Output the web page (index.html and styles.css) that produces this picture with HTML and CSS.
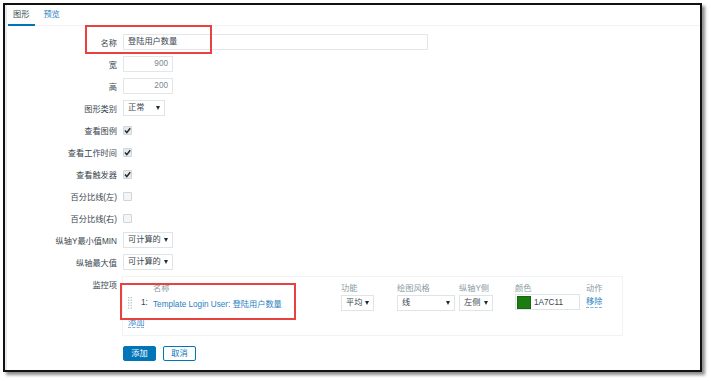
FILE: index.html
```html
<!DOCTYPE html>
<html lang="zh-CN">
<head>
<meta charset="utf-8">
<title>图形</title>
<link rel="stylesheet" href="styles.css">
</head>
<body>
<div class="frame">
  <div class="page">
    <div class="tabs">
      <span class="tab active">图形</span>
      <span class="tab link">预览</span>
    </div>
    <div class="form">
      <div class="row"><span class="lbl">名称</span><div class="ctl"><span class="inp name">登陆用户数量</span></div></div>
      <div class="row"><span class="lbl">宽</span><div class="ctl"><span class="inp num">900</span></div></div>
      <div class="row"><span class="lbl">高</span><div class="ctl"><span class="inp num">200</span></div></div>
      <div class="row"><span class="lbl">图形类别</span><div class="ctl"><span class="sel w42">正常<i class="arr"></i></span></div></div>
      <div class="row"><span class="lbl">查看图例</span><div class="ctl"><span class="cb on"><svg viewBox="0 0 9 9" width="9" height="9"><path d="M2 4.6 L3.8 6.6 L7.2 2.2" fill="none" stroke="#1f2c33" stroke-width="1.5"/></svg></span></div></div>
      <div class="row"><span class="lbl">查看工作时间</span><div class="ctl"><span class="cb on"><svg viewBox="0 0 9 9" width="9" height="9"><path d="M2 4.6 L3.8 6.6 L7.2 2.2" fill="none" stroke="#1f2c33" stroke-width="1.5"/></svg></span></div></div>
      <div class="row"><span class="lbl">查看触发器</span><div class="ctl"><span class="cb on"><svg viewBox="0 0 9 9" width="9" height="9"><path d="M2 4.6 L3.8 6.6 L7.2 2.2" fill="none" stroke="#1f2c33" stroke-width="1.5"/></svg></span></div></div>
      <div class="row"><span class="lbl">百分比线(左)</span><div class="ctl"><span class="cb"></span></div></div>
      <div class="row"><span class="lbl">百分比线(右)</span><div class="ctl"><span class="cb"></span></div></div>
      <div class="row"><span class="lbl">纵轴Y最小值MIN</span><div class="ctl"><span class="sel w50">可计算的<i class="arr"></i></span></div></div>
      <div class="row"><span class="lbl">纵轴最大值</span><div class="ctl"><span class="sel w50">可计算的<i class="arr"></i></span></div></div>
      <div class="row top"><span class="lbl">监控项</span>
        <div class="ctl">
          <div class="items">
            <div class="irow head">
              <span></span><span></span><span>名称</span><span>功能</span><span>绘图风格</span><span>纵轴Y侧</span><span>颜色</span><span>动作</span>
            </div>
            <div class="irow data">
              <span class="drag"><svg viewBox="0 0 4 12" width="4" height="12"><g fill="#b4bfc6"><rect x="0" y="0" width="1.3" height="1.3"/><rect x="2.6" y="0" width="1.3" height="1.3"/><rect x="0" y="2.6" width="1.3" height="1.3"/><rect x="2.6" y="2.6" width="1.3" height="1.3"/><rect x="0" y="5.2" width="1.3" height="1.3"/><rect x="2.6" y="5.2" width="1.3" height="1.3"/><rect x="0" y="7.8" width="1.3" height="1.3"/><rect x="2.6" y="7.8" width="1.3" height="1.3"/><rect x="0" y="10.4" width="1.3" height="1.3"/><rect x="2.6" y="10.4" width="1.3" height="1.3"/></g></svg></span>
              <span class="no">1:</span>
              <span class="link">Template Login User: 登陆用户数量</span>
              <span><span class="sel w33">平均<i class="arr"></i></span></span>
              <span><span class="sel w58">线<i class="arr"></i></span></span>
              <span><span class="sel w34">左侧<i class="arr"></i></span></span>
              <span><span class="color"><i class="swatch"></i>1A7C11</span></span>
              <span class="link act">移除</span>
            </div>
            <div class="addrow"><span class="link act">添加</span></div>
          </div>
        </div>
      </div>
      <div class="row btns"><span class="lbl"></span>
        <div class="ctl"><span class="btn primary">添加</span><span class="btn">取消</span></div>
      </div>
    </div>
  </div>
  <div class="mark m1"></div>
  <div class="mark m2"></div>
</div>
</body>
</html>
```
FILE: styles.css
```css
* { box-sizing: border-box; }
html, body { margin: 0; padding: 0; background: #fff; }
body {
  font-family: "Liberation Sans", "Noto Sans CJK SC", Arial, sans-serif;
  font-size: 8.2px;
  color: #39464e;
  width: 711px;
  height: 381px;
  overflow: hidden;
}
.frame {
  position: relative;
  margin: 3px 0 0 3px;
  width: 699px;
  height: 369px;
  border: 2px solid #111;
  box-shadow: 3px 3px 3px rgba(0, 0, 0, 0.45);
  background: #fff;
}
.page {
  height: 100%;
  border-left: 2px solid #e8ecf0;
}
.tabs {
  display: flex;
  height: 21px;
  padding-left: 1px;
  border-bottom: 1px solid #f0f2f4;
}
.tab {
  margin-top: 1px;
  line-height: 18px;
  height: 20px;
  padding: 0 6px 0 5px;
  border-bottom: 2px solid transparent;
}
.tab.active { border-bottom-color: #0275b8; }
.tab + .tab { margin-left: 3px; }
.link { color: #2a7fbf; }
.form { padding-top: 5px; }
.row {
  display: grid;
  grid-template-columns: 110px 1fr;
  column-gap: 6px;
  height: 22px;
  align-items: center;
}
.lbl { text-align: right; white-space: nowrap; }
.ctl { display: flex; align-items: center; }
.inp {
  display: inline-block;
  height: 16px;
  line-height: 14px;
  border: 1px solid #e3e7ea;
  padding: 0 4px;
  background: #fff;
}
.inp.name { width: 305px; }
.inp.num { width: 50px; text-align: right; color: #7a8890; }
.sel {
  position: relative;
  display: inline-block;
  height: 16px;
  line-height: 14px;
  border: 1px solid #dfe4e7;
  padding: 0 4px;
  background: #fff;
  white-space: nowrap;
}
.arr {
  position: absolute;
  right: 4px;
  top: 5px;
  width: 0;
  height: 0;
  border-left: 2.5px solid transparent;
  border-right: 2.5px solid transparent;
  border-top: 4px solid #1f2c33;
}
.w42 { width: 42px; }
.w50 { width: 50px; }
.w33 { width: 33px; }
.w58 { width: 58px; }
.w34 { width: 34px; }
.cb {
  display: inline-block;
  width: 9px;
  height: 9px;
  border: 1px solid #cfd5d9;
  background: #f4f5f6;
  border-radius: 1px;
  position: relative;
}
.cb.on { background: #e7eaec; }
.cb svg { position: absolute; left: -1px; top: -1px; }
.row.top {
  height: auto;
  align-items: start;
  margin-top: 3px;
}
.row.top .lbl { line-height: 20px; }
.items {
  width: 501px;
  margin-left: -1px;
  border: 1px solid #f0f2f4;
  padding: 4px 0 6px 4px;
}
.irow {
  display: grid;
  grid-template-columns: 14px 12px 188px 56px 62px 56px 71px 1fr;
  align-items: center;
}
.irow.head { height: 12px; color: #8a9aa3; }
.irow.data { height: 17px; margin-top: 1px; }
.drag { display: flex; align-items: center; padding-left: 1px; }
.drag svg { display: block; }
.color {
  display: inline-flex;
  align-items: center;
  width: 65px;
  height: 16px;
  border: 1px solid #dfe4e7;
  padding: 0 0 0 1px;
  background: #fff;
}
.swatch {
  display: inline-block;
  width: 14px;
  height: 13px;
  background: #1a7c11;
  border: 1px solid #17650f;
  margin-right: 3px;
}
.act { border-bottom: 1px dashed #7fb3da; line-height: 10px; justify-self: start; }
.addrow { margin-top: 6px; height: 12px; line-height: 12px; padding-left: 1px; }
.row.btns { margin-top: 10px; height: 15px; }
.btn {
  display: inline-block;
  width: 33px;
  height: 15px;
  line-height: 13px;
  text-align: center;
  border: 1px solid #0275b8;
  color: #0275b8;
  background: #fff;
  border-radius: 2px;
  margin-right: 7px;
}
.btn.primary { background: #0275b8; color: #fff; }
.mark {
  position: absolute;
  border: 2px solid #e8423f;
}
.m1 { left: 80px; top: 20px; width: 127px; height: 29px; }
.m2 { left: 115px; top: 278px; width: 176px; height: 37px; }
```
